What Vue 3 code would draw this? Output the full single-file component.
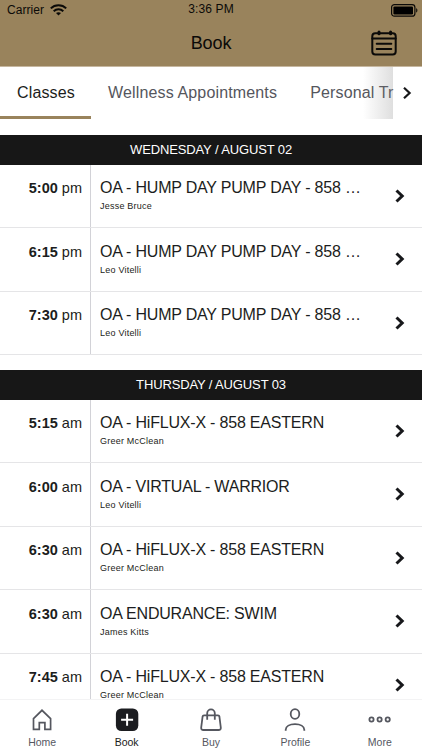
<script setup>
const days = [
  {
    label: 'WEDNESDAY / AUGUST 02',
    classes: [
      { time: '5:00', half: 'pm', title: 'OA - HUMP DAY PUMP DAY - 858 …', coach: 'Jesse Bruce' },
      { time: '6:15', half: 'pm', title: 'OA - HUMP DAY PUMP DAY - 858 …', coach: 'Leo Vitelli' },
      { time: '7:30', half: 'pm', title: 'OA - HUMP DAY PUMP DAY - 858 …', coach: 'Leo Vitelli' },
    ],
  },
  {
    label: 'THURSDAY / AUGUST 03',
    classes: [
      { time: '5:15', half: 'am', title: 'OA - HiFLUX-X - 858 EASTERN', coach: 'Greer McClean' },
      { time: '6:00', half: 'am', title: 'OA - VIRTUAL - WARRIOR', coach: 'Leo Vitelli' },
      { time: '6:30', half: 'am', title: 'OA - HiFLUX-X - 858 EASTERN', coach: 'Greer McClean' },
      { time: '6:30', half: 'am', title: 'OA ENDURANCE: SWIM', coach: 'James Kitts' },
      { time: '7:45', half: 'am', title: 'OA - HiFLUX-X - 858 EASTERN', coach: 'Greer McClean' },
    ],
  },
]
</script>

<template>
  <div class="screen">
    <header class="header">
      <div class="status">
        <div class="carrier">
          <span>Carrier</span>
          <svg width="17" height="12" viewBox="0 0 17 12" fill="none" stroke="#0b0a08" stroke-width="2">
            <path d="M.8 4.4C5 .2 12 .2 16.2 4.4" />
            <path d="M3.7 7.2c2.7-2.6 6.9-2.6 9.6 0" />
            <path d="M6 9.1c1.4-1.3 3.6-1.3 5 0L8.5 11.6z" fill="#0b0a08" stroke="none" />
          </svg>
        </div>
        <span class="clock">3:36 PM</span>
        <svg class="battery" width="27" height="13" viewBox="0 0 27 13">
          <rect x=".6" y=".6" width="23.3" height="11.6" rx="2.8" fill="none" stroke="#0b0a08" stroke-width="1.2" />
          <rect x="2.4" y="2.4" width="19.6" height="8" rx="1.2" fill="#000" />
          <path d="M25.2 4.3c1.6.5 1.6 3.7 0 4.2z" fill="#0b0a08" />
        </svg>
      </div>
      <div class="titlebar">
        <h1>Book</h1>
        <svg class="calendar" width="26" height="26" viewBox="0 0 26 26" fill="none" stroke="#0b0a08" stroke-width="2" stroke-linecap="round">
          <rect x="1.3" y="3.2" width="23.4" height="21.3" rx="3" />
          <path d="M1.3 8.6h23.4M5.7 13.8h14.6M5.7 19h14.6" />
          <path d="M8 2v1.8M19.6 2v1.8" stroke-width="3" />
        </svg>
      </div>
    </header>

    <nav class="tabs">
      <div class="tablist">
        <span class="tab active">Classes</span>
        <span class="tab">Wellness Appointments</span>
        <span class="tab">Personal Tr</span>
      </div>
      <div class="scroll-next">
        <svg width="10" height="12" viewBox="0 0 10 12" fill="none" stroke="#161719" stroke-width="2.2"><path d="M2 .8L7.6 6 2 11.2" /></svg>
      </div>
    </nav>

    <main class="schedule">
      <section v-for="day in days" :key="day.label" class="day">
        <h2>{{ day.label }}</h2>
        <div v-for="(c, i) in day.classes" :key="i" class="row">
          <div class="time"><b>{{ c.time }}</b> {{ c.half }}</div>
          <div class="info">
            <div class="name">{{ c.title }}</div>
            <div class="coach">{{ c.coach }}</div>
          </div>
          <svg class="chev" width="10" height="14" viewBox="0 0 10 14" fill="none" stroke="#17181b" stroke-width="3"><path d="M1.5 1.5L7.2 7l-5.7 5.5" /></svg>
        </div>
      </section>
    </main>

    <footer class="bottom">
      <div class="item">
        <svg width="24" height="24" viewBox="0 0 24 24" fill="none" stroke="#55575f" stroke-width="1.7"><path d="M3.5 10.7L12 2.3l8.6 8.4v10.6h-5.7v-6.6H9.3v6.6H3.5z" /></svg>
        <span>Home</span>
      </div>
      <div class="item on">
        <svg width="24" height="24" viewBox="0 0 24 24"><rect x=".9" y=".4" width="22.4" height="22.6" rx="5.5" fill="#1b1c20" /><path d="M12.1 5.7v12M6.1 11.7h12" stroke="#fff" stroke-width="2" /></svg>
        <span>Book</span>
      </div>
      <div class="item">
        <svg width="24" height="24" viewBox="0 0 24 24" fill="none" stroke="#55575f" stroke-width="1.8"><path d="M5 7.3h14q1.2 0 1.4 1.2l1.4 11q.2 2.5-2.2 2.5H4.4q-2.4 0-2.2-2.5l1.4-11Q3.8 7.3 5 7.3z" stroke-linejoin="round" /><path d="M8.2 11.8V5.2a3.8 3.8 0 0 1 7.6 0v6.6" /></svg>
        <span>Buy</span>
      </div>
      <div class="item">
        <svg width="24" height="24" viewBox="0 0 24 24" fill="none" stroke="#55575f" stroke-width="1.8"><ellipse cx="12" cy="6" rx="4.3" ry="4.8" /><path d="M2.7 22.8v-1c0-3.4 3.8-5.6 9.3-5.6s9.3 2.2 9.3 5.6v1" /></svg>
        <span>Profile</span>
      </div>
      <div class="item">
        <svg width="24" height="24" viewBox="0 0 24 24" fill="none" stroke="#55575f" stroke-width="1.8"><circle cx="3.5" cy="11.5" r="2.1" /><circle cx="11.6" cy="11.5" r="2.1" /><circle cx="19.7" cy="11.5" r="2.1" /></svg>
        <span>More</span>
      </div>
    </footer>
  </div>
</template>

<style>
body { margin: 0; overflow: hidden; }
</style>

<style scoped>
.screen { width: 422px; height: 750px; display: flex; flex-direction: column; overflow: hidden; background: #fff; color: #1c1d20; font-family: "Liberation Sans", Arial, sans-serif; white-space: nowrap; }
svg { display: block; flex: none; }
.header { box-sizing: border-box; height: 67px; flex: none; background: #99835c; border-bottom: 1px solid #c6b7a0; color: #0b0a08; }
.status { height: 20px; display: grid; grid-template-columns: 1fr auto 1fr; align-items: center; padding: 0 4px 0 7px; font-size: 12px; }
.carrier { display: flex; align-items: center; gap: 6px; letter-spacing: .05px; }
.clock { letter-spacing: .15px; line-height: 18px; align-self: start; padding-right: 3px; }
.battery { justify-self: end; }
.titlebar { height: 46px; display: grid; grid-template-columns: 1fr auto 1fr; align-items: center; }
h1 { grid-column: 2; margin: 0; font-size: 18px; font-weight: 400; line-height: 46px; letter-spacing: -.1px; }
.calendar { justify-self: end; margin-right: 25px; }
.tabs { height: 68px; flex: none; display: flex; align-items: flex-start; }
.tablist { position: relative; width: 392.5px; height: 52px; display: flex; }
.tablist::after { content: ""; position: absolute; right: 0; top: 0; width: 30px; height: 52px; background: linear-gradient(90deg, rgba(130,130,130,0), rgba(130,130,130,.26)); }
.tab { box-sizing: border-box; flex: none; height: 52px; padding: 0 16.2px 0 17px; line-height: 52px; font-size: 16px; letter-spacing: .14px; color: #55565d; }
.tab:last-child { padding-right: 0; }
.tab.active { color: #1c1d20; border-bottom: 3px solid #99835c; }
.scroll-next { width: 29px; height: 52px; display: flex; align-items: center; padding-left: 9.5px; box-sizing: border-box; }
.schedule { flex: 1; min-height: 0; overflow: hidden; }
.day { margin-bottom: 15px; }
h2 { margin: 0; height: 29.5px; line-height: 29px; background: #171717; color: #fff; text-align: center; font-size: 13px; font-weight: 400; letter-spacing: -.13px; }
.row { box-sizing: border-box; height: 63.5px; display: flex; border-bottom: 1px solid #e5e5e7; }
.time { box-sizing: border-box; width: 91px; border-right: 1px solid #d2d2d7; padding: 13.5px 8px 0 0; text-align: right; font-size: 14.5px; line-height: 20px; }
.info { flex: 1; min-width: 0; padding: 13.5px 0 0 9px; }
.name { font-size: 16px; line-height: 20px; letter-spacing: -.2px; }
.coach { margin-top: 3px; font-size: 9px; line-height: 11px; letter-spacing: .22px; }
.chev { margin: 24px 17px 0 0; }
.bottom { box-sizing: border-box; height: 51px; flex: none; display: grid; grid-template-columns: repeat(5, 1fr); padding-top: 8px; border-top: 1px solid #f3f3f4; background: #fff; }
.item { display: flex; flex-direction: column; align-items: center; font-size: 10.5px; line-height: 13px; color: #55575f; gap: 4px; }
.item.on { color: #1b1c20; }
</style>
